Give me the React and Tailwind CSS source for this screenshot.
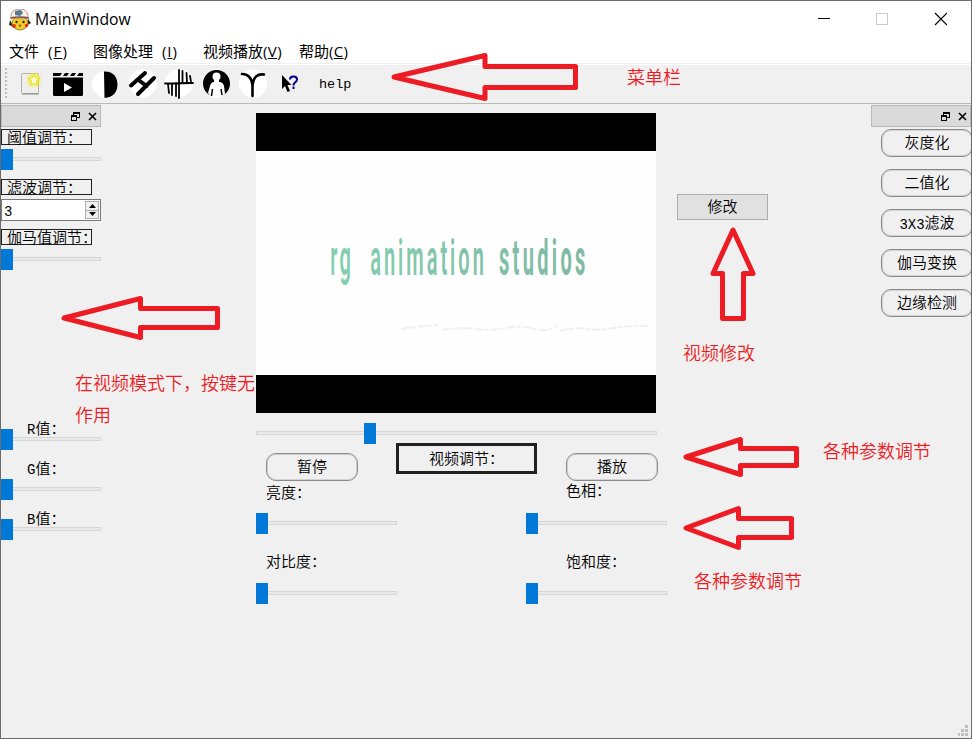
import React from "react";

const song = "font-['Liberation_Mono','Noto_Sans_CJK_SC',monospace] text-[15px] leading-[18px] font-[350] whitespace-nowrap tracking-normal";
const hei = "font-['Open_Sans','Noto_Sans_CJK_SC',sans-serif]";

function Slider({ before = "w-0", className = "" }) {
  return (
    <div className={`flex h-[21px] items-start ${className}`}>
      <div className={`mt-2 h-1 shrink-0 border-y border-[#d6d6d6] bg-[#e7eaea] ${before}`} />
      <div className="h-[21px] w-3 shrink-0 bg-[#0078d7]" />
      <div className="mt-2 h-1 flex-1 border border-l-0 border-[#d6d6d6] bg-[#e7eaea]" />
    </div>
  );
}

function DockHeader() {
  return (
    <div className="flex h-[22px] w-[100px] shrink-0 items-center justify-end border border-[#b9b9b9] bg-[#dadada] pt-0.5 pr-[3px]">
      <svg width="26" height="10" viewBox="0 0 26 10" fill="none" stroke="#000" shapeRendering="crispEdges">
        <path d="M2 3V1H7M2 .5H8.500V5.500H6" strokeWidth="1" />
        <path d="M.5 3V8.500H5.500V3M0 3.500H6M0 4.500H6M2 1.500H9" />
        <path d="M18 1L25 8M25 1L18 8" strokeWidth="1.6" shapeRendering="auto" />
      </svg>
    </div>
  );
}

function FrameLabel({ children, className = "" }) {
  return (
    <div className={`flex h-4 w-[91px] items-center border border-[#202020] pt-1.5 pl-[5px] ${song} ${className}`}>
      <span className="shrink-0">{children}</span>
    </div>
  );
}

function RoundButton({ children, className = "" }) {
  return (
    <button className={`flex h-[28px] shrink-0 items-center justify-center rounded-[10px] border border-[#8a8a8a] bg-[#f0f0f0] pt-1 shadow-[inset_0_0_0_1px_#d2d2d2] ${song} ${className}`}>
      {children}
    </button>
  );
}

function Tool({ children }) {
  return (
    <svg className="shrink-0" width="32" height="32" viewBox="0 0 32 32" fill="none">
      {children}
    </svg>
  );
}

function Mascot() {
  return (
    <svg width="22" height="22" viewBox="0 0 22 22">
      <path d="M1 11L0 16L5 18M19 10L22 14L17 17" fill="#332a1c" />
      <ellipse cx="11" cy="14" rx="8" ry="7" fill="#f3cf25" stroke="#7b5b12" strokeWidth=".7" />
      <path d="M2 10C1 3 5 0 11 0C17 0 19 4 19 8L14 10L5 9Z" fill="#f5efe9" stroke="#b5654c" strokeWidth=".7" />
      <path d="M6 2L12 1L14 4L11 7L6 6Z" fill="#527a94" />
      <path d="M1 9.500Q10 8 21 10L19 8Q11 6.500 2 8Z" fill="#6f5046" />
      <circle cx="7.500" cy="13" r="1.200" fill="#302218" />
      <circle cx="14.500" cy="13" r="1.200" fill="#302218" />
      <circle cx="5" cy="17" r="1.900" fill="#e22c22" />
      <circle cx="17.500" cy="16.500" r="1.700" fill="#e22c22" />
      <path d="M9.500 16L11 15.500L12.500 16L11 18.500Z" fill="#a24935" />
    </svg>
  );
}

function MenuBar() {
  return (
    <nav className={`flex h-[25px] items-center bg-white pl-2 text-[15px] leading-[20px] whitespace-pre ${hei}`}>
      <div className="flex w-[84px]"><span className="w-[39px]">文件</span><span className="tracking-[1.1px]">(<u>F</u>)</span></div>
      <div className="flex w-[110px]"><span className="w-[69px]">图像处理</span><span className="tracking-[0.9px]">(<u>I</u>)</span></div>
      <div className="w-24">视频播放<span className="tracking-[0.4px]">(<u>V</u>)</span></div>
      <div>帮助<span className="tracking-[0.3px]">(<u>C</u>)</span></div>
    </nav>
  );
}

function ToolBar() {
  return (
    <div className="flex h-[39px] items-start border-b border-[#b9b9b9] bg-[#f0f0f0] pt-[3px]">
      <svg className="mr-[7px] shrink-0" width="7" height="32" viewBox="0 0 7 32">
        <path d="M5 0V32" stroke="#bdbdbd" strokeWidth="2" strokeDasharray="2 2" />
      </svg>
      <div className="flex gap-[5px]">
        <Tool>
          <rect x="6.500" y="5.500" width="17" height="20" rx="1" fill="#eeeeea" stroke="#b1b1ac" />
          <path d="M7 26H24" stroke="#85857f" />
          <circle cx="19" cy="12" r="7" fill="#f7ee28" opacity=".55" />
          <path d="M19 6.500L20.600 10L24.500 10.500L21.700 13.200L22.400 17L19 15.200L15.600 17L16.300 13.200L13.500 10.500L17.400 10Z" fill="#fffef0" stroke="#efe11b" strokeWidth="1.200" strokeLinejoin="round" />
        </Tool>
        <Tool>
          <rect x="1" y="11.500" width="30" height="16.500" rx="1.500" fill="#000" />
          <path d="M1 9.500H31V13H1ZM1 5H10L8 8H1ZM13 5H17L15 8H11ZM20 5H24L22 8H18ZM27 5H31V8H25Z" fill="#000" />
          <path d="M12 15L20 19.500L12 24Z" fill="#fff" />
        </Tool>
        <Tool>
          <circle cx="16" cy="16.500" r="13" fill="#fff" />
          <path d="M15 3.500C24 3 28.500 9 28.500 16.500S24 29.500 15.500 30Z" fill="#000" />
        </Tool>
        <Tool>
          <circle cx="17" cy="15" r="14" fill="#fff" />
          <path d="M5 17.500L19 5M12 26L28 10M12.500 12L20.500 18" stroke="#000" strokeWidth="4" strokeLinecap="round" />
        </Tool>
        <Tool>
          <circle cx="16" cy="15" r="14" fill="#fff" />
          <path d="M2 15.500L30 15M16 2V30M19.500 3V15M23.500 5L24 14M27 8L28 14M5 16L6 25M9 16V27M13 15V28" stroke="#000" strokeWidth="1.800" strokeLinecap="round" />
        </Tool>
        <Tool>
          <circle cx="16.500" cy="15.500" r="13.500" fill="#000" />
          <circle cx="16.500" cy="8.500" r="4" fill="#fff" />
          <path d="M14 10H19V14Q23 14 24 18L25 26L21 29H11L8 25L10 18Q11 14 14 14Z" fill="#fff" />
          <path d="M12.500 21L11.500 28M21 21L22 27" stroke="#000" strokeWidth="1.500" />
        </Tool>
        <Tool>
          <circle cx="16" cy="15.500" r="14" fill="#fff" />
          <path d="M5 6Q14 6 15.500 17V28M15.500 17Q17 5 27 6.500" stroke="#000" strokeWidth="2.600" strokeLinecap="round" />
        </Tool>
        <Tool>
          <path d="M8 7V21L11 18L13.500 24L16 23L13.500 17H17.500Z" fill="#000" />
          <path d="M16 11.500Q16 8.500 19.500 8.500T23 11.500Q23 13 21 14.500Q19.500 15.500 19.500 17.500M19.500 18.500V21" stroke="#000080" strokeWidth="2" />
        </Tool>
      </div>
      <span className="mt-[9px] ml-[13px] font-['Liberation_Mono',monospace] text-[13.5px] leading-4">help</span>
    </div>
  );
}

function LeftDock() {
  return (
    <aside className="flex w-[100px] shrink-0 flex-col pt-px">
      <DockHeader />
      <FrameLabel className="mt-0.5">阈值调节：</FrameLabel>
      <Slider className="mt-1" />
      <FrameLabel className="mt-[9px]">滤波调节：</FrameLabel>
      <div className="mt-1 flex h-[22px] border border-[#7a7a7a] bg-white p-px pl-[2px]">
        <span className="flex-1 pt-[3px] font-['Liberation_Mono',monospace] text-[14px] leading-4">3</span>
        <div className="flex w-[14px] flex-col border border-[#adadad] bg-[#f0f0f0]">
          <div className="flex flex-1 items-center justify-center border-b border-[#adadad]">
            <svg width="7" height="4"><path d="M0 4L3.500 0L7 4Z" /></svg>
          </div>
          <div className="flex flex-1 items-center justify-center">
            <svg width="7" height="4"><path d="M0 0L3.500 4L7 0Z" /></svg>
          </div>
        </div>
      </div>
      <FrameLabel className="mt-2">伽马值调节：</FrameLabel>
      <Slider className="mt-1" />
      <div className={`mt-[148px] h-[11px] pl-[26px] ${song}`}><span className="block pt-[3px]"><span className="text-[14px]">R</span>值：</span></div>
      <Slider />
      <div className={`mt-2 h-[21px] pt-[3px] pl-[26px] ${song}`}><span className="text-[14px]">G</span>值：</div>
      <Slider />
      <div className={`mt-2 h-[11px] pl-[26px] ${song}`}><span className="block pt-[3px]"><span className="text-[14px]">B</span>值：</span></div>
      <Slider />
    </aside>
  );
}

function VideoFrame() {
  return (
    <div className="h-[300px] w-[400px] bg-black py-[38px]">
      <svg className="block bg-[#fefefe]" width="400" height="224" viewBox="0 0 400 224">
        <defs>
          <linearGradient id="mint" gradientUnits="userSpaceOnUse" x1="0" y1="0" x2="640" y2="0">
            <stop offset="0" stopColor="#83cfb0" />
            <stop offset="1" stopColor="#7fb9a3" />
          </linearGradient>
        </defs>
        <g transform="translate(75 124) scale(.4 1)" fill="url(#mint)" fontFamily="Roboto, sans-serif" fontSize="50" fontWeight="600">
          <text x="-2" y="0" letterSpacing="6">rg</text>
          <text x="98" y="0" textLength="284" lengthAdjust="spacing">animation</text>
          <text x="420" y="0" textLength="216" lengthAdjust="spacing" fontWeight="700">studios</text>
        </g>
        <path d="M146 178Q162 175 182 174M187 179Q205 176 220 178T250 177T278 178T302 174M304 180Q318 176 330 178T358 177T394 175" fill="none" stroke="#f0f0f0" strokeWidth="2" strokeDasharray="9 1 4 2" />
      </svg>
    </div>
  );
}

function VideoPanel() {
  return (
    <main className="ml-[155px] w-[411px] shrink-0 pt-[9px]">
      <VideoFrame />
      <Slider className="mt-2.5 w-[401px]" before="w-[108px] border-l" />
      <div className="-mt-px flex h-[37px] items-start pl-2.5">
        <RoundButton className="mt-2.5 w-[92px]">暂停</RoundButton>
        <div className={`ml-[38px] flex h-[31px] w-[141px] items-center border-3 border-[#202020] pt-1 pl-[30px] ${song}`}>视频调节：</div>
        <RoundButton className="mt-2.5 ml-[29px] w-[92px]">播放</RoundButton>
      </div>
      <div className="flex justify-between">
        <div className="w-[141px]">
          <div className={`h-[29px] pt-1.5 pl-2.5 ${song}`}>亮度：</div>
          <Slider className="mt-1" />
          <div className={`mt-[18px] h-[31px] pt-[3px] pl-2.5 ${song}`}>对比度：</div>
          <Slider />
        </div>
        <div className="w-[141px]">
          <div className={`h-[29px] pt-1 pl-10 ${song}`}>色相：</div>
          <Slider className="mt-1" />
          <div className={`mt-[18px] h-[31px] pt-[3px] pl-10 ${song}`}>饱和度：</div>
          <Slider />
        </div>
      </div>
    </main>
  );
}

function RightDock() {
  return (
    <aside className="ml-auto w-[100px] shrink-0 overflow-hidden pt-px">
      <DockHeader />
      <div className="mt-0.5 ml-2.5 flex w-[92px] flex-col gap-3">
        <RoundButton>灰度化</RoundButton>
        <RoundButton>二值化</RoundButton>
        <RoundButton><span className="text-[14px]">3X3</span>滤波</RoundButton>
        <RoundButton>伽马变换</RoundButton>
        <RoundButton>边缘检测</RoundButton>
      </div>
    </aside>
  );
}

const arrows = [
  "394,77 485,55.5 485,66.5 575.5,66.5 575.5,87.5 485,87.5 485,98.500",
  "64,318 140.5,298.5 140.5,308.5 217.5,308.5 217.5,327.5 140.5,327.5 140.5,337.500",
  "733,230 753,273.5 743.5,273.5 743.5,318.5 722.5,318.5 722.5,273.5 713,273.500",
  "686,457 740.5,439.5 740.5,448.5 796.5,448.5 796.5,465.5 740.5,465.5 740.5,474.500",
  "686,528 738.5,508.5 738.5,518.5 791.5,518.5 791.5,537.5 738.5,537.5 738.5,547.500",
];

function Annotations() {
  return (
    <div className={`pointer-events-none absolute -inset-px text-[18px] leading-8 font-[350] whitespace-nowrap text-[#ed1c24] ${hei}`}>
      <svg className="absolute inset-0" width="972" height="739" viewBox="0 0 972 739" fill="none" stroke="#ed1c24" strokeWidth="5" strokeLinejoin="round">
        {arrows.map((p) => <polygon key={p} points={p} />)}
      </svg>
      <span className="absolute top-[61px] left-[627px]">菜单栏</span>
      <span className="absolute top-[337px] left-[683px]">视频修改</span>
      <span className="absolute top-[367px] left-[75px]">在视频模式下，按键无<br />作用</span>
      <span className="absolute top-[435px] left-[823px]">各种参数调节</span>
      <span className="absolute top-[565px] left-[694px]">各种参数调节</span>
    </div>
  );
}

export default function App() {
  return (
    <div className="relative flex h-[739px] w-[972px] flex-col overflow-hidden border border-[#6b6b6b] bg-[#f0f0f0] text-black">
      <header className={`flex h-[37px] items-center bg-white pl-2 ${hei}`}>
        <Mascot />
        <span className="ml-1 text-[15.7px]">MainWindow</span>
        <svg className="mr-6 mb-px ml-auto" width="130" height="14" viewBox="0 0 130 14" fill="none">
          <path d="M1 6.500H13" stroke="#000" />
          <rect x="59.500" y="1.500" width="11" height="11" stroke="#cbcbcb" />
          <path d="M118 1L130 13M130 1L118 13" stroke="#000" strokeWidth="1.200" />
        </svg>
      </header>
      <MenuBar />
      <div className="h-0.5 border-t border-[#f0f0f0] bg-white" />
      <ToolBar />
      <div className="flex flex-1">
        <LeftDock />
        <VideoPanel />
        <div className="pt-[90px] pl-2.5">
          <button className={`flex h-[26px] w-[91px] items-center justify-center border border-[#adadad] bg-[#e1e1e1] pt-1 ${song}`}>修改</button>
        </div>
        <RightDock />
      </div>
      <div className="-mt-3 flex justify-end pr-[3px] pb-0.5">
        <svg width="10" height="11" fill="#bfbfbf">
          <path d="M7 0h3v3h-3zM3 4h3v3h-3zM7 4h3v3h-3zM0 8h2v3h-2zM3 8h3v3h-3zM7 8h3v3h-3z" />
        </svg>
      </div>
      <Annotations />
    </div>
  );
}
